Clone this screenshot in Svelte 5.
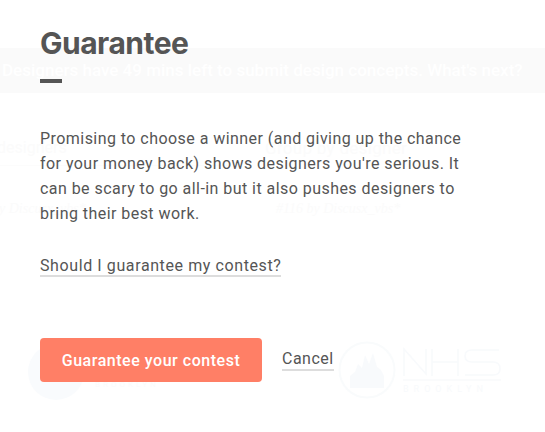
<script>
	const ghostTexts = [
		{ cls: 'g-sort', text: 'designers' },
		{ cls: 'g-group', text: 'Group by designer' },
		{ cls: 'g-by1', text: 'by Discusx_vbs*' },
		{ cls: 'g-by2', text: '#116 by Discusx_vbs*' },
		{ cls: 'g-small', text: 'BROOKLYN' }
	];
</script>

<div class="page">
	<!-- page behind the white overlay, barely visible -->
	<div class="ghost" aria-hidden="true">
		<div class="g-banner">Designers have 49 mins left to submit design concepts. What's next?</div>
		{#each ghostTexts as g}
			<span class="g-text {g.cls}">{g.text}</span>
		{/each}
		<div class="g-line"></div>
		<div class="g-circle"></div>
		<svg class="g-logo" width="164" height="60" viewBox="0 0 164 60" fill="none">
			<circle cx="29" cy="30" r="27.5" stroke="#f9fbfc" stroke-width="2" />
			<path d="M12 48 V36 L17 32 L20 24 L24 28 L27 15 L31 24 L35 13 L39 27 L43 30 L46 36 V48 Z" fill="#f8fafc" />
			<path d="M66 36 V9 L88 34 V9 M94 9 V36 M94 22 H120 M120 9 V36 M161 10 H134 Q127 10 127 16 Q127 22 134 22 H155 Q162 22 162 29 Q162 35 155 35 H127" stroke="#f8fafc" stroke-width="1.5" />
			<path d="M65 40 H163" stroke="#f9fafb" stroke-width="1.5" />
			<text x="65" y="52" class="g-brooklyn">BROOKLYN</text>
		</svg>
	</div>

	<section class="modal">
		<h1>Guarantee</h1>
		<div class="rule"></div>
		<p>
			Promising to choose a winner (and giving up the chance
			for your money back) shows designers you're serious. It
			can be scary to go all-in but it also pushes designers to
			bring their best work.
		</p>
		<div class="help"><a href="#help">Should I guarantee my contest?</a></div>
		<div class="actions">
			<button type="button">Guarantee your contest</button>
			<a href="#cancel">Cancel</a>
		</div>
	</section>
</div>

<style>
	:global(body) {
		margin: 0;
		background: #fff;
	}
	.page {
		position: relative;
		height: 432px;
		overflow: hidden;
		font-family: Roboto, "Liberation Sans", sans-serif;
		color: #555;
	}
	.ghost {
		position: absolute;
		inset: 0;
	}
	.g-banner {
		position: absolute;
		left: 0;
		right: 0;
		top: 48px;
		height: 45px;
		line-height: 45px;
		padding-left: 2px;
		background: #fafafa;
		color: #fff;
		font-size: 17px;
		font-weight: 500;
		white-space: nowrap;
	}
	.g-text {
		position: absolute;
		color: #fbfbfb;
		white-space: nowrap;
	}
	.g-sort {
		left: -3px;
		top: 138px;
		font-size: 16px;
	}
	.g-group {
		left: 265px;
		top: 138px;
		font-size: 17px;
		letter-spacing: 0.3px;
	}
	.g-by1 {
		left: -8px;
		top: 201px;
		font: italic 14px "Liberation Serif", serif;
	}
	.g-by2 {
		left: 276px;
		top: 201px;
		font: italic 14px "Liberation Serif", serif;
	}
	.g-small {
		left: 95px;
		top: 380px;
		font-size: 8px;
		letter-spacing: 3px;
	}
	.g-line {
		position: absolute;
		left: 0;
		top: 165px;
		width: 230px;
		height: 1px;
		background: #fcfcfc;
	}
	.g-circle {
		position: absolute;
		left: 28px;
		top: 344px;
		width: 56px;
		height: 56px;
		border-radius: 50%;
		background: #f9fbfd;
	}
	.g-logo {
		position: absolute;
		left: 338px;
		top: 340px;
	}
	.g-brooklyn {
		font-size: 9px;
		letter-spacing: 5px;
		fill: #f8fafc;
	}
	.modal {
		position: relative;
		padding: 24px 0 0 40px;
	}
	h1 {
		margin: 0;
		font: 700 30px/38px Inter, "Liberation Sans", sans-serif;
		letter-spacing: -0.5px;
		color: #555;
	}
	.rule {
		width: 22px;
		height: 4px;
		margin-top: 17px;
		background: #555;
	}
	p {
		margin: 43px 0 0;
		width: 470px;
		font-size: 16px;
		line-height: 25px;
		letter-spacing: 0.45px;
		white-space: pre-line;
		color: #555;
	}
	a {
		color: #555;
		text-decoration: none;
		border-bottom: 2px solid #ddd;
	}
	.help {
		margin-top: 29px;
		font-size: 16px;
		line-height: 21px;
		letter-spacing: 0.6px;
	}
	.actions {
		display: flex;
		align-items: flex-start;
		gap: 20px;
		margin-top: 62px;
		font-size: 16px;
		letter-spacing: 0.5px;
	}
	.actions a {
		line-height: 21px;
		margin-top: 10px;
	}
	button {
		width: 222px;
		height: 44px;
		border: 0;
		border-radius: 4px;
		background: #ff7f66;
		color: #fff;
		font: 500 16px Roboto, sans-serif;
		letter-spacing: 0.53px;
	}
</style>
